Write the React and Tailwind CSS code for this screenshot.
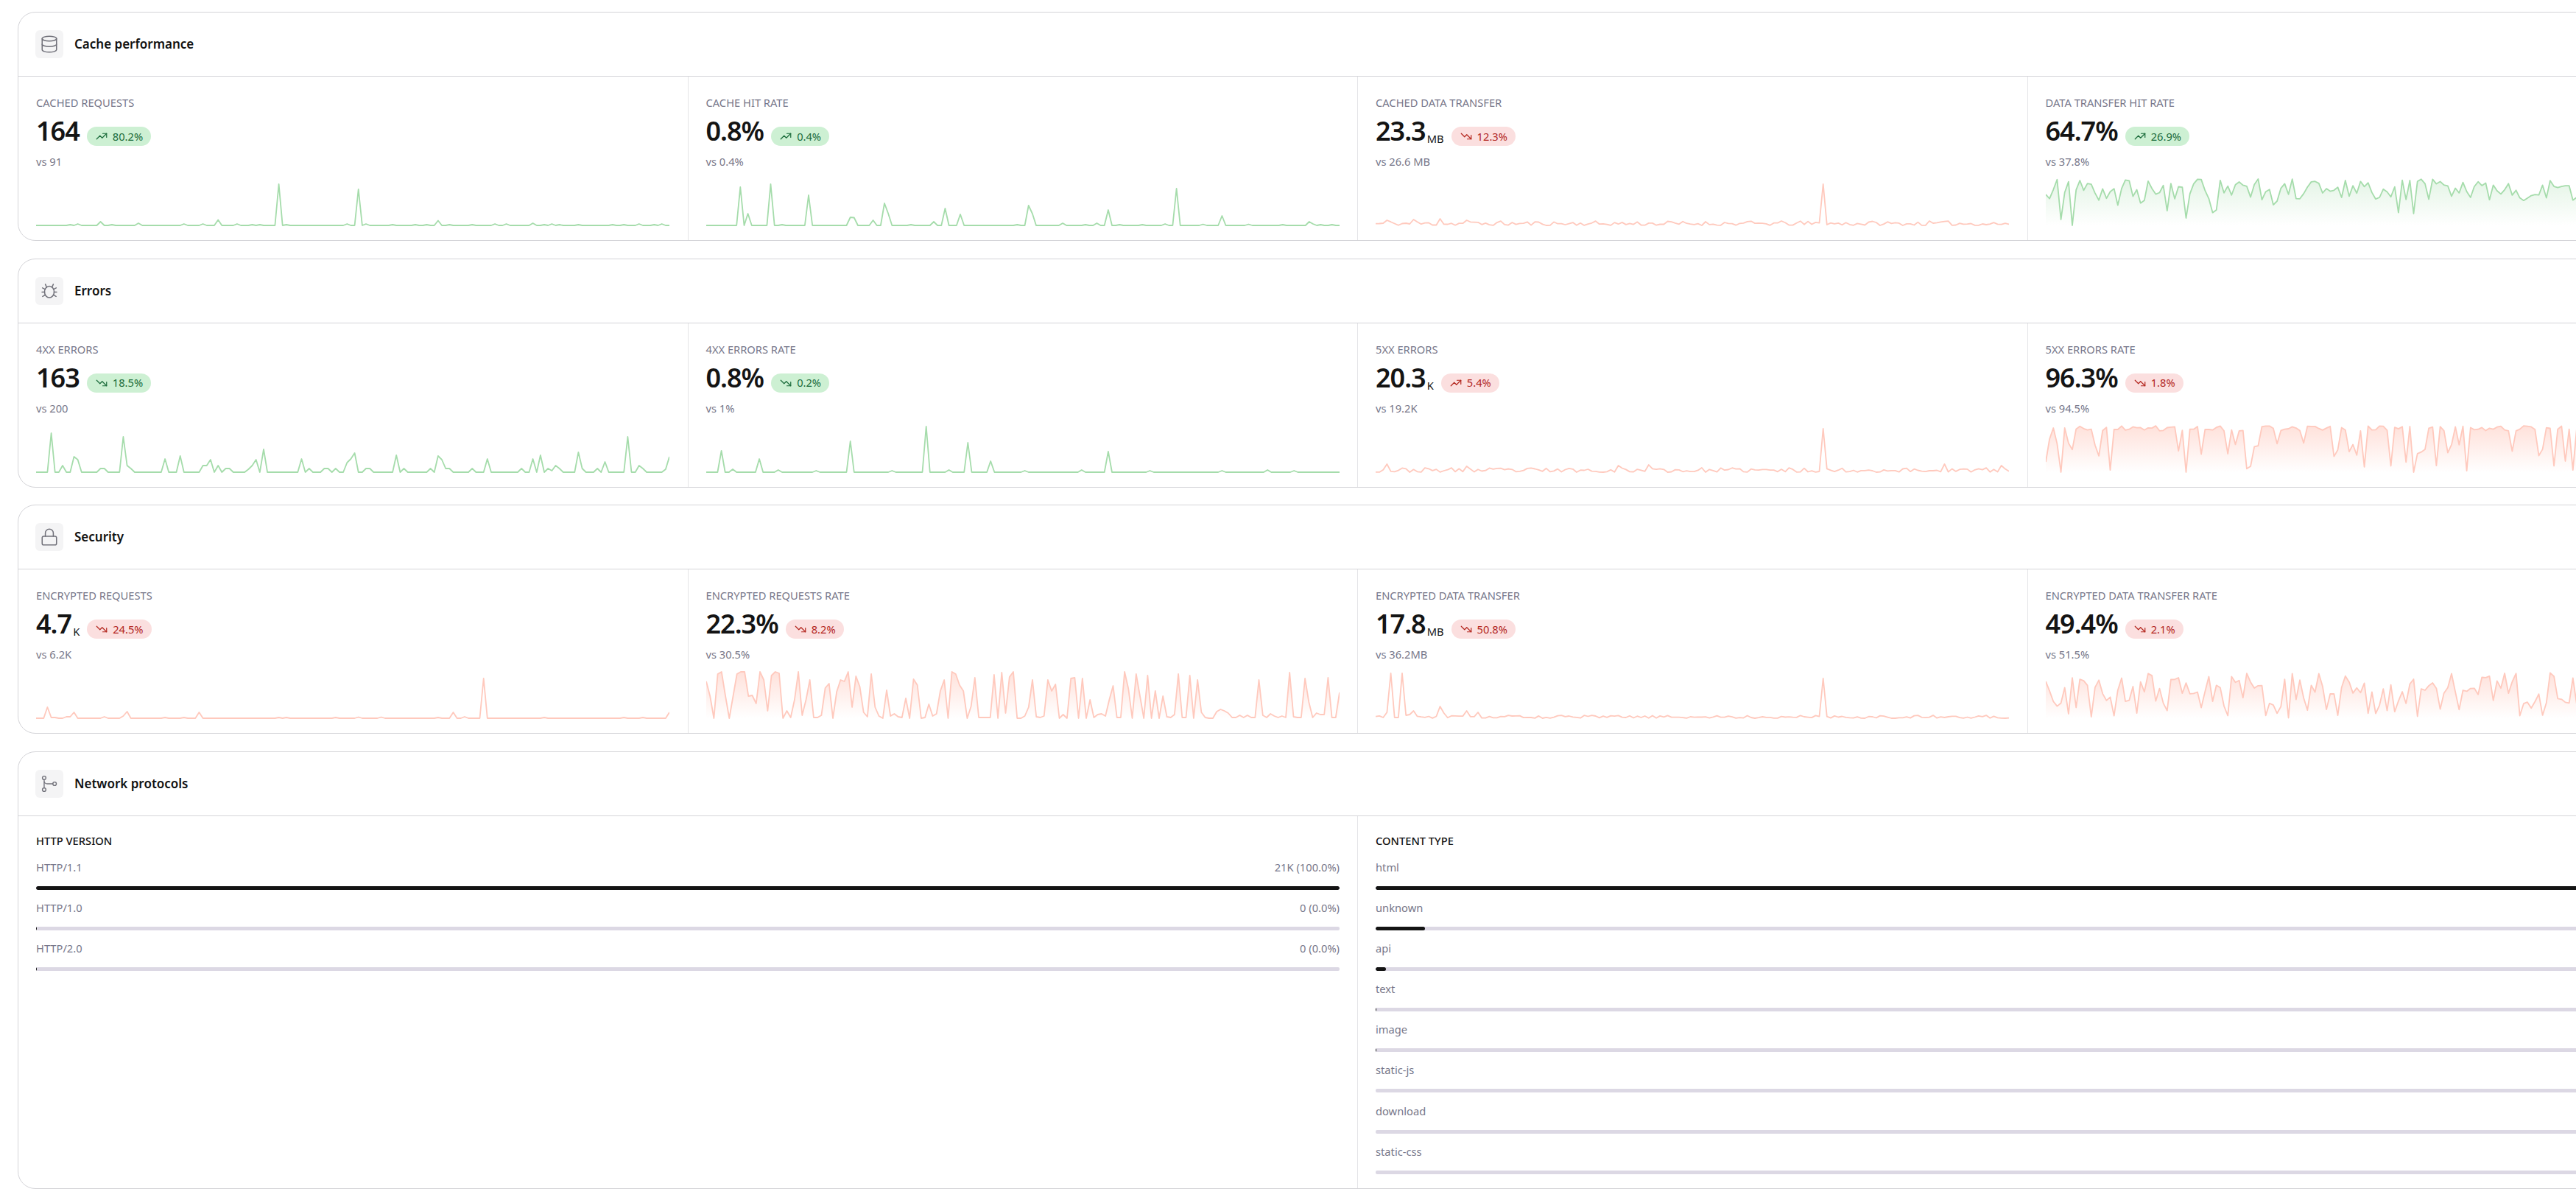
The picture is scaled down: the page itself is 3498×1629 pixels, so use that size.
import { useId } from "react";
import { Database, Lock } from "lucide-react";
import { TbTrendingUp, TbTrendingDown } from "react-icons/tb";

const FONT = "font-['Noto_Sans',sans-serif]";

// small seeded generator so the noisy charts stay the same between renders
function rng(seed) {
  let s = seed;
  return () => {
    s = (s + 0x6d2b79f5) | 0;
    let t = Math.imul(s ^ (s >>> 15), 1 | s);
    t = (t + Math.imul(t ^ (t >>> 7), 61 | t)) ^ t;
    return ((t ^ (t >>> 14)) >>> 0) / 4294967296;
  };
}

const N = 168;
const STEP = 860 / (N - 1);

function spikes(pairs) {
  const out = Array(N).fill(0);
  pairs.forEach(([x, h]) => {
    out[Math.round(x / STEP)] = h;
  });
  return out;
}

function lowNoise(seed, max, pairs) {
  const r = rng(seed);
  const out = Array.from({ length: N }, () => Math.pow(r(), 1.4) * max);
  pairs.forEach(([x, h]) => {
    out[Math.round(x / STEP)] = h;
  });
  return out;
}

function highNoise(seed, lo, hi, dipChance, dipLo, dipHi, pairs = []) {
  const r = rng(seed);
  const out = Array.from({ length: N }, () =>
    r() < dipChance ? dipLo + r() * (dipHi - dipLo) : lo + r() * (hi - lo)
  );
  pairs.forEach(([x, h]) => {
    out[Math.round(x / STEP)] = h;
  });
  return out;
}

const cachedRequests = spikes([
  [47, 1], [57, 2], [88, 5], [104, 1], [140, 3], [201, 2], [228, 2], [249, 7.5], [275, 2], [292, 1], [306, 1],
  [328, 56], [342, 1], [421, 2], [437, 49], [447, 2], [483, 1], [515, 1], [530, 1], [546, 6.5], [562, 1], [593, 1],
  [624, 2], [640, 2], [676, 3], [688, 1], [698, 2], [713, 1], [734, 1], [784, 1], [800, 1], [821, 2], [837, 1], [848, 2],
]);
const cacheHitRate = spikes([
  [46, 52], [57, 16], [88, 56], [103, 1], [140, 41], [198, 11], [203, 10.5], [228, 7], [244, 30], [249, 16], [276, 1], [307, 5],
  [327, 23], [343, 15], [420, 1], [437, 27], [442, 16], [483, 3], [515, 1], [531, 3], [546, 21], [562, 1], [593, 1], [624, 2],
  [640, 50], [676, 1.5], [698, 13], [734, 1.5], [785, 1], [817, 5], [822, 2], [836, 1], [848, 1],
]);
const cachedTransfer = lowNoise(11, 6, [[609, 56], [15, 7], [52, 8], [88, 9], [124, 7]]);
const transferHitRate = highNoise(4, 34, 63, 0.07, 15, 35, [
  [0, 42], [22, 8], [37, 0], [188, 10], [234, 21], [308, 28], [500, 16],
]);

const errors4xx = spikes([
  [20, 53], [36, 9], [51, 21], [56, 17], [87, 5], [92, 5], [119, 48], [126, 9], [131, 5], [177, 18], [198, 22], [228, 9], [233, 9],
  [239, 17], [249, 9], [260, 5], [265, 5], [290, 4], [295, 9], [300, 17], [307, 31], [359, 18], [369, 5], [391, 5], [396, 5], [406, 5],
  [422, 13], [427, 18], [432, 26], [447, 5], [452, 5], [489, 23], [499, 5], [536, 5], [547, 22], [552, 17], [557, 5], [562, 5],
  [593, 5], [614, 18], [660, 5], [677, 18], [687, 23], [693, 5], [698, 2], [703, 9], [713, 5], [734, 27], [744, 5], [760, 5],
  [775, 14], [801, 48], [817, 9], [822, 5], [853, 4], [859, 21],
]);
const errors4xxRate = spikes([
  [20, 29], [36, 4], [71, 18], [100, 3], [150, 2], [196, 42], [250, 2], [301, 62], [330, 3], [357, 40], [388, 15], [430, 2],
  [510, 3], [547, 28], [600, 2], [700, 2], [760, 3], [800, 2],
]);
const errors5xx = lowNoise(23, 6, [[609, 59], [15, 11], [124, 8], [330, 9], [373, 10], [770, 11], [852, 9]]);
const errors5xxRate = highNoise(9, 56, 63, 0.34, 0, 42, [[0, 14], [5, 45], [10, 60], [22, 0], [190, 0], [500, 0]]);

const encrypted = spikes([
  [15, 15], [20, 1], [25, 1], [40, 2], [46, 2], [51, 8], [92, 2], [119, 3], [124, 9], [177, 1], [203, 1], [223, 8],
  [328, 1], [340, 1], [405, 1], [437, 1.5], [467, 1.5], [545, 1], [566, 8], [582, 2], [609, 54], [691, 1], [798, 1], [825, 1], [859, 8],
]);
const encryptedRate = [
  50, 30, 0, 60, 63, 30, 0, 30, 60, 63, 63, 30, 31, 20, 63, 52, 10, 58, 63, 61, 0, 10, 1, 25, 63, 4, 25, 52, 1, 1, 4, 41, 47, 0, 36, 52,
  50, 63, 15, 57, 43, 8, 2, 60, 15, 3, 0, 38, 3, 6, 2, 1, 27, 0, 53, 45, 0, 1, 19, 3, 6, 37, 52, 0, 63, 60, 45, 37, 0, 16, 55, 1, 1, 1,
  1, 59, 0, 62, 7, 56, 63, 0, 0, 3, 15, 52, 2, 1, 3, 52, 37, 46, 0, 5, 0, 54, 55, 0, 54, 0, 25, 1, 5, 6, 3, 25, 44, 1, 1, 63, 40, 0, 60,
  30, 0, 58, 0, 37, 0, 30, 2, 1, 5, 60, 1, 1, 58, 0, 52, 8, 1, 0, 0, 9, 12, 10, 7, 1, 1, 4, 1, 4, 1, 1, 52, 4, 1, 6, 3, 1, 3, 1, 62, 2,
  1, 1, 54, 22, 1, 7, 5, 5, 55, 1, 1, 35,
];
const encryptedTransfer = lowNoise(31, 4, [
  [10, 1], [15, 8], [20, 61], [25, 1], [31, 1], [36, 61], [41, 4], [46, 5], [52, 10], [88, 16], [93, 7], [124, 10], [140, 8], [609, 54],
]);
const encryptedTransferRate = highNoise(17, 32, 63, 0.36, 0, 30, [[0, 50]]);

function BugIcon() {
  return (
    <svg width="26" height="26" viewBox="0 0 24 24" fill="none" stroke="currentColor" strokeWidth="1.4" strokeLinecap="round">
      <path d="M8.7 7.4 7 3.6M15.3 7.4 17 3.6" />
      <ellipse cx="12" cy="13.2" rx="6" ry="7.2" />
      <path d="M6.7 9.8 3.4 8.2M17.3 9.8l3.3-1.6M6 13.4H2.8M18 13.4h3.2M6.9 17l-3.3 1.8M17.1 17l3.3 1.8" />
    </svg>
  );
}

function ProtocolIcon() {
  return (
    <svg width="26" height="26" viewBox="0 0 24 24" fill="none" stroke="currentColor" strokeWidth="1.3" strokeLinecap="round">
      <circle cx="5.5" cy="4.6" r="2.2" />
      <circle cx="5.5" cy="19.4" r="2.2" />
      <circle cx="18.6" cy="12" r="2.2" />
      <path d="M5.5 6.8v10.4M5.5 8.2a3.8 3.8 0 0 0 3.8 3.8h7.1" />
    </svg>
  );
}

const sections = [
  {
    title: "Cache performance",
    icon: <Database size={26} strokeWidth={1.4} />,
    metrics: [
      { label: "CACHED REQUESTS", value: "164", up: true, good: true, change: "80.2%", prev: "vs 91", data: cachedRequests },
      { label: "CACHE HIT RATE", value: "0.8%", up: true, good: true, change: "0.4%", prev: "vs 0.4%", data: cacheHitRate },
      { label: "CACHED DATA TRANSFER", value: "23.3", unit: "MB", up: false, good: false, change: "12.3%", prev: "vs 26.6 MB", data: cachedTransfer },
      { label: "DATA TRANSFER HIT RATE", value: "64.7%", up: true, good: true, change: "26.9%", prev: "vs 37.8%", data: transferHitRate, area: true },
    ],
  },
  {
    title: "Errors",
    icon: <BugIcon />,
    metrics: [
      { label: "4XX ERRORS", value: "163", up: false, good: true, change: "18.5%", prev: "vs 200", data: errors4xx },
      { label: "4XX ERRORS RATE", value: "0.8%", up: false, good: true, change: "0.2%", prev: "vs 1%", data: errors4xxRate },
      { label: "5XX ERRORS", value: "20.3", unit: "K", up: true, good: false, change: "5.4%", prev: "vs 19.2K", data: errors5xx },
      { label: "5XX ERRORS RATE", value: "96.3%", up: false, good: false, change: "1.8%", prev: "vs 94.5%", data: errors5xxRate, area: true },
    ],
  },
  {
    title: "Security",
    icon: <Lock size={26} strokeWidth={1.4} />,
    metrics: [
      { label: "ENCRYPTED REQUESTS", value: "4.7", unit: "K", up: false, good: false, change: "24.5%", prev: "vs 6.2K", data: encrypted },
      { label: "ENCRYPTED REQUESTS RATE", value: "22.3%", up: false, good: false, change: "8.2%", prev: "vs 30.5%", data: encryptedRate, area: true },
      { label: "ENCRYPTED DATA TRANSFER", value: "17.8", unit: "MB", up: false, good: false, change: "50.8%", prev: "vs 36.2MB", data: encryptedTransfer },
      { label: "ENCRYPTED DATA TRANSFER RATE", value: "49.4%", up: false, good: false, change: "2.1%", prev: "vs 51.5%", data: encryptedTransferRate, area: true },
    ],
  },
];

const httpVersions = [
  { name: "HTTP/1.1", pct: 100, text: "21K (100.0%)" },
  { name: "HTTP/1.0", pct: 0.08, text: "0 (0.0%)" },
  { name: "HTTP/2.0", pct: 0.08, text: "0 (0.0%)" },
];

const contentTypes = [
  { name: "html", pct: 100 },
  { name: "unknown", pct: 3.8 },
  { name: "api", pct: 0.8 },
  { name: "text", pct: 0.08 },
  { name: "image", pct: 0.08 },
  { name: "static-js", pct: 0 },
  { name: "download", pct: 0 },
  { name: "static-css", pct: 0 },
];

function Sparkline({ data, good, area }) {
  const id = useId();
  const color = good ? "#a5dcab" : "#ffc9bd";
  const base = 68;
  const pts = data.map((h, i) => [(i * 860) / (data.length - 1), base - h]);
  const line = pts.map(([x, y]) => `${x.toFixed(1)},${y.toFixed(1)}`).join(" ");
  return (
    <svg width="860" height="72" className="mt-[9px] block">
      {area && (
        <>
          <defs>
            <linearGradient id={id} x1="0" y1="0" x2="0" y2="1">
              <stop offset="0" stopColor={color} stopOpacity={good ? "0.3" : "0.55"} />
              <stop offset="1" stopColor={color} stopOpacity="0" />
            </linearGradient>
          </defs>
          <polygon points={`0,${base} ${line} 860,${base}`} fill={`url(#${id})`} />
        </>
      )}
      <polyline points={line} fill="none" stroke={color} strokeWidth="1.8" strokeLinejoin="round" />
    </svg>
  );
}

function Badge({ up, good, change }) {
  const Icon = up ? TbTrendingUp : TbTrendingDown;
  return (
    <span
      className={`ml-[10px] flex h-[26px] items-center gap-[6px] self-end rounded-full px-[11px] text-[14.7px] leading-none ${
        good ? "bg-[#cdf0d3] text-[#1a6b3a]" : "bg-[#fbdfdf] text-[#b3261e]"
      }`}
    >
      <Icon size={18} strokeWidth={1.6} />
      {change}
    </span>
  );
}

function MetricCell({ metric, last }) {
  return (
    <div className={`h-[222px] pl-[24px] pt-[25px] ${last ? "" : "border-r border-[#e4e4e7]"}`}>
      <p className="text-[14.7px] leading-[20px] text-[#77778a]">{metric.label}</p>
      <div className="mt-[9px] flex h-[40px] items-center">
        <span className="text-[36px] font-semibold leading-[40px] tracking-[-1px] text-[#141414]">{metric.value}</span>
        {metric.unit && <span className="ml-[2px] self-end text-[14.7px] leading-[20px] text-[#141414]">{metric.unit}</span>}
        <Badge up={metric.up} good={metric.good} change={metric.change} />
      </div>
      <p className="mt-[11px] text-[14.7px] leading-[20px] text-[#77778a]">{metric.prev}</p>
      <Sparkline data={metric.data} good={metric.good} area={metric.area} />
    </div>
  );
}

function Section({ title, icon, children }) {
  return (
    <section className="mb-[23.5px] rounded-[24px] border border-[#d4d4d8]">
      <header className="flex h-[87px] items-center gap-[15px] border-b border-[#d4d4d8] pl-[23px]">
        <div className="flex h-[38px] w-[38px] items-center justify-center rounded-[6px] bg-[#f4f4f5] text-[#71717a]">
          {icon}
        </div>
        <h2 className="text-[17px] font-semibold leading-[24px] text-[#111]">{title}</h2>
      </header>
      {children}
    </section>
  );
}

function BarList({ heading, rows, border }) {
  return (
    <div className={`h-[505.5px] px-[24px] pt-[23px] ${border ? "border-r border-[#e4e4e7]" : ""}`}>
      <p className="mb-[16px] text-[14.7px] font-medium leading-[20px] text-[#111]">{heading}</p>
      {rows.map((row) => (
        <div key={row.name} className="h-[55.2px]">
          <div className="flex justify-between text-[14.7px] leading-[20px] text-[#77778a]">
            <span>{row.name}</span>
            <span>{row.text}</span>
          </div>
          <div className="mt-[16px] h-[5px] overflow-hidden rounded-[2px] bg-[#dcd8e4]">
            <div className="h-full rounded-full bg-[#141414]" style={{ width: `${row.pct}%` }} />
          </div>
        </div>
      ))}
    </div>
  );
}

export default function App() {
  return (
    <div className={`h-screen w-screen overflow-hidden bg-white pl-[24px] pt-[16px] ${FONT}`}>
      <div className="w-[3640px]">
        {sections.map((section) => (
          <Section key={section.title} title={section.title} icon={section.icon}>
            <div className="grid grid-cols-4">
              {section.metrics.map((metric, i) => (
                <MetricCell key={metric.label} metric={metric} last={i === 3} />
              ))}
            </div>
          </Section>
        ))}
        <Section title="Network protocols" icon={<ProtocolIcon />}>
          <div className="grid grid-cols-2">
            <BarList heading="HTTP VERSION" rows={httpVersions} border />
            <BarList heading="CONTENT TYPE" rows={contentTypes} />
          </div>
        </Section>
      </div>
    </div>
  );
}
